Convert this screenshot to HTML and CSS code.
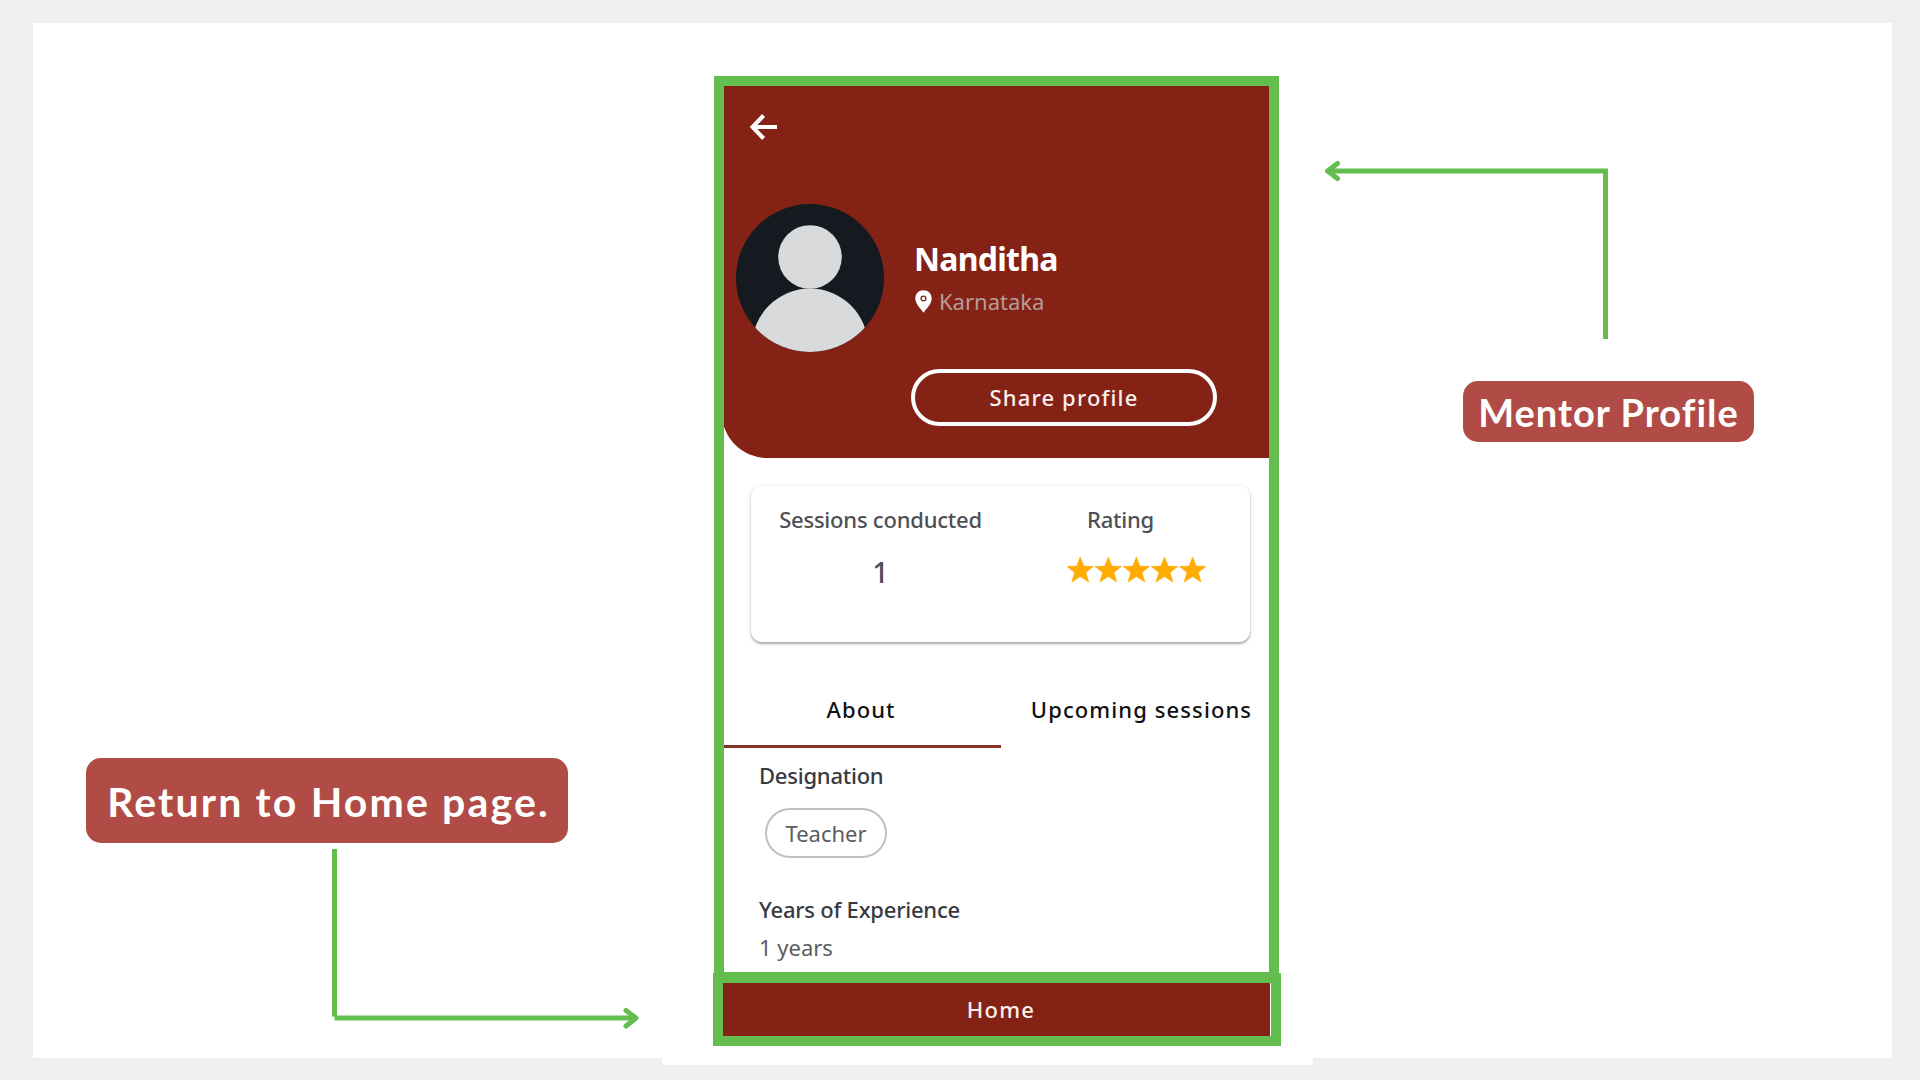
FILE: index.html
```html
<!DOCTYPE html>
<html lang="en">
<head>
<meta charset="utf-8">
<title>Mentor Profile</title>
<link rel="stylesheet" href="styles.css">
</head>
<body>
<main class="page">
  <section class="screen">
    <div class="phone">
      <header class="hero">
        <svg class="back" viewBox="0 0 27 26" width="27" height="26"><path d="M27 13H3M13.600 1.500L2.600 13l11 11.500" fill="none" stroke="#fff" stroke-width="4.200"/></svg>
        <div class="identity">
          <svg class="avatar" viewBox="0 0 148 148" width="148" height="148">
            <defs><clipPath id="disc"><circle cx="74" cy="74" r="74"/></clipPath></defs>
            <g clip-path="url(#disc)">
              <rect width="148" height="148" fill="#151a20"/>
              <circle cx="74" cy="53" r="31.800" fill="#d9dadc"/>
              <circle cx="74" cy="142.500" r="58" fill="#d9dadc"/>
            </g>
          </svg>
          <div class="info">
            <h1 class="name">Nanditha</h1>
            <p class="location">
              <svg viewBox="0 0 17 23" width="17" height="23"><path d="M8.500 0.300C3.800 0.300 0.300 3.800 0.300 8.300c0 5.700 5 10 8.200 14.400 3.200-4.400 8.200-8.700 8.200-14.400C16.700 3.800 13.200 0.300 8.500 0.300z" fill="#fff"/><circle cx="8.500" cy="8.500" r="2.400" fill="none" stroke="#842216" stroke-width="1.300"/></svg>
              <span>Karnataka</span>
            </p>
            <button class="share">Share profile</button>
          </div>
        </div>
      </header>
      <div class="stats">
        <div class="stat stat-sessions">
          <span class="stat-label">Sessions conducted</span>
          <span class="stat-value">1</span>
        </div>
        <div class="stat stat-rating">
          <span class="stat-label">Rating</span>
          <svg class="stars" viewBox="0 0 139 25" width="139" height="25" fill="#ffab00">
            <defs><path id="star" d="M13.200 0L16.700 9.100L26.400 9.400L18.800 15.500L21.600 25L13.200 19.600L4.800 25L7.600 15.500L0 9.400L9.700 9.100z" stroke="#ffab00" stroke-width=".6"/></defs>
            <use href="#star"/><use href="#star" x="28.100"/><use href="#star" x="56.200"/><use href="#star" x="84.300"/><use href="#star" x="112.400"/>
          </svg>
        </div>
      </div>
      <nav class="tabs">
        <span class="tab tab-active">About</span>
        <span class="tab">Upcoming sessions</span>
      </nav>
      <div class="details">
        <h2 class="field">Designation</h2>
        <span class="chip">Teacher</span>
        <h2 class="field">Years of Experience</h2>
        <p class="value">1 years</p>
      </div>
    </div>
    <div class="home">Home</div>
  </section>

  <svg class="arrow arrow-profile" viewBox="0 0 285 179" width="285" height="179"><path d="M284 11H4M281.500 11V179"/><path class="head" d="M13.500 3.500L3.500 11l10 7.500"/></svg>
  <div class="label label-profile">Mentor Profile</div>
  <div class="label label-home">Return to Home page.</div>
  <svg class="arrow arrow-home" viewBox="0 0 308 182" width="308" height="182"><path d="M2.500 0V167.500M2.500 169H303"/><path class="head" d="M294 161.500L304 169l-10 8"/></svg>
</main>
</body>
</html>
```
FILE: styles.css
```css
* { box-sizing: border-box; }

body {
  margin: 0;
  height: 1080px;
  padding: 23px 0 0 33px;
  overflow: hidden;
  background: #efefef;
  font: 400 22px/30px "Noto Sans", sans-serif;
}

h1, h2, p { margin: 0; }

.page {
  position: relative;
  width: 1859px;
  height: 1035px;
  background: #fff;
}

.screen {
  width: 651px;
  height: 1042px;
  margin-left: 629px;
  padding: 53px 0 0 52px;
  background: #fff;
}

.phone {
  width: 565px;
  height: 906px;
  border: 10px solid #63bd4f;
  overflow: hidden;
}

.hero {
  height: 372px;
  margin-left: -2px;
  padding: 28px 0 0 14px;
  border-bottom-left-radius: 45px;
  background: #842216;
  color: #fff;
}

.back { display: block; margin-left: 14px; }

.identity { display: flex; gap: 30px; margin-top: 64px; }

.info { padding-top: 33px; }

.name { font-size: 32px; line-height: 44px; font-weight: 700; letter-spacing: -0.75px; }

.location {
  display: flex;
  align-items: center;
  gap: 7px;
  margin: 5px 0 0 1px;
  color: #b59d98;
}

.share {
  width: 306px;
  height: 57px;
  margin: 53px 0 0 -3px;
  padding: 0 0 2px;
  border: 4px solid #fff;
  border-radius: 29px;
  background: none;
  color: #fbeeec;
  font: 500 22px/30px "Noto Sans", sans-serif;
  letter-spacing: 1.15px;
}

.stats {
  display: flex;
  width: 499px;
  height: 156px;
  margin: 28px 0 0 27px;
  padding-top: 18px;
  border-radius: 11px;
  background: #fff;
  box-shadow: 0 2px 2px rgba(0, 0, 0, .26), 0 1px 5px rgba(0, 0, 0, .14);
  color: #4e5056;
  font-weight: 500;
  letter-spacing: -0.22px;
}

.stat { display: flex; flex-direction: column; }
.stat-sessions { width: 259px; align-items: center; }
.stat-value { margin-top: 18px; font-size: 29px; line-height: 40px; }
.stat-rating { margin-left: 57px; }
.stat-rating .stat-label { margin-left: 20px; }
.stars { margin-top: 23px; overflow: visible; }

.tabs {
  display: flex;
  height: 76px;
  margin-top: 30px;
  color: #111;
  font-weight: 500;
  letter-spacing: 1.1px;
}

.tab {
  display: flex;
  flex: none;
  align-items: center;
  justify-content: center;
  width: 281px;
  border-bottom: 3px solid transparent;
}

.tab-active { width: 277px; padding-right: 3px; border-color: #823126; }

.details {
  display: flex;
  flex-direction: column;
  align-items: flex-start;
  padding: 12px 0 0 35px;
  color: #5b5c60;
}

.field {
  color: #383a40;
  font-size: 22px;
  line-height: 30px;
  font-weight: 500;
  letter-spacing: -0.23px;
}

.chip {
  width: 122px;
  height: 50px;
  margin: 18px 0 36px 6px;
  border: 2px solid #c0c0c0;
  border-radius: 25px;
  line-height: 46px;
  text-align: center;
}

.value { margin-top: 8px; }

.home {
  display: flex;
  align-items: center;
  justify-content: center;
  position: relative;
  width: 568px;
  height: 73px;
  margin: -9px 0 0 -1px;
  padding: 0 0 2px 8px;
  border: 10px solid #63bd4f;
  background: #842216;
  box-shadow: inset -1px 0 #fff;
  color: #fbeeec;
  font-weight: 500;
  letter-spacing: 1.3px;
}

/* Callouts placed freely around the phone */
.label {
  position: absolute;
  display: flex;
  align-items: center;
  justify-content: center;
  border-radius: 15px;
  background: #b14b45;
  color: #fff;
  font-family: Lato, sans-serif;
  font-weight: 700;
  white-space: nowrap;
}

.label-profile { left: 1430px; top: 358px; width: 291px; height: 61px; font-size: 38px; letter-spacing: 1.02px; }
.label-home { left: 53px; top: 735px; width: 482px; height: 85px; padding: 3px 0 0 3px; font-size: 41px; letter-spacing: 2.15px; }

.arrow { position: absolute; fill: none; stroke: #63bd4f; stroke-width: 5; }
.arrow .head { stroke-linecap: round; stroke-linejoin: round; }
.arrow-profile { left: 1291px; top: 137px; }
.arrow-home { left: 299px; top: 826px; }
```
